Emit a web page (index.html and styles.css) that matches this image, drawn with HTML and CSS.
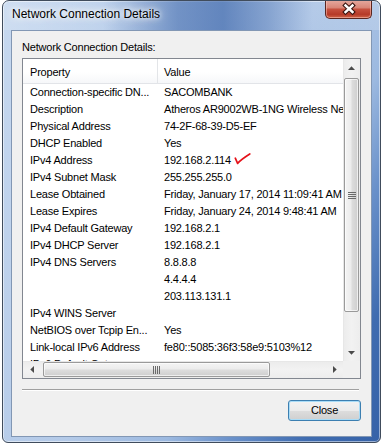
FILE: index.html
```html
<!DOCTYPE html>
<html>
<head>
<meta charset="utf-8">
<title>Network Connection Details</title>
<link rel="stylesheet" href="styles.css">
</head>
<body>
<div class="window">
  <div class="titlebar">
    <span class="title">Network Connection Details</span>
    <div class="close-x" aria-label="Close">
      <svg width="45" height="18" viewBox="0 0 45 18">
        <path d="M19.5 5.5 L26.5 12 M26.5 5.5 L19.5 12" stroke="#3b1612" stroke-width="4.6" stroke-linecap="square" fill="none"/>
        <path d="M19.5 5.5 L26.5 12 M26.5 5.5 L19.5 12" stroke="#ffffff" stroke-width="2.4" stroke-linecap="square" fill="none"/>
      </svg>
    </div>
  </div>
  <div class="client">
    <div class="label">Network Connection Details:</div>
    <div class="listbox">
      <div class="viewport">
        <div class="header"><div class="h1">Property</div><div class="h2">Value</div></div>
        <div class="row"><div class="c1">Connection-specific DN...</div><div class="c2">SACOMBANK</div></div>
        <div class="row"><div class="c1">Description</div><div class="c2">Atheros AR9002WB-1NG Wireless Network Adapter</div></div>
        <div class="row"><div class="c1">Physical Address</div><div class="c2">74-2F-68-39-D5-EF</div></div>
        <div class="row"><div class="c1">DHCP Enabled</div><div class="c2">Yes</div></div>
        <div class="row"><div class="c1">IPv4 Address</div><div class="c2">192.168.2.114<svg class="check" width="17" height="12" viewBox="0 0 17 12"><path d="M1.3 5.2 L3.6 10.4 Q7 6.5 15.8 1" stroke="#e5121a" stroke-width="1.7" stroke-linecap="round" stroke-linejoin="round" fill="none"/></svg></div></div>
        <div class="row"><div class="c1">IPv4 Subnet Mask</div><div class="c2">255.255.255.0</div></div>
        <div class="row"><div class="c1">Lease Obtained</div><div class="c2">Friday, January 17, 2014 11:09:41 AM</div></div>
        <div class="row"><div class="c1">Lease Expires</div><div class="c2">Friday, January 24, 2014 9:48:41 AM</div></div>
        <div class="row"><div class="c1">IPv4 Default Gateway</div><div class="c2">192.168.2.1</div></div>
        <div class="row"><div class="c1">IPv4 DHCP Server</div><div class="c2">192.168.2.1</div></div>
        <div class="row"><div class="c1">IPv4 DNS Servers</div><div class="c2">8.8.8.8</div></div>
        <div class="row"><div class="c1"></div><div class="c2">4.4.4.4</div></div>
        <div class="row"><div class="c1"></div><div class="c2">203.113.131.1</div></div>
        <div class="row"><div class="c1">IPv4 WINS Server</div><div class="c2"></div></div>
        <div class="row"><div class="c1">NetBIOS over Tcpip En...</div><div class="c2">Yes</div></div>
        <div class="row"><div class="c1">Link-local IPv6 Address</div><div class="c2">fe80::5085:36f3:58e9:5103%12</div></div>
        <div class="row"><div class="c1">IPv6 Default Gateway</div><div class="c2"></div></div>
      </div>
      <div class="vscroll">
        <div class="sb-btn"><svg width="7" height="4" viewBox="0 0 7 4"><polygon points="0,4 3.5,0.3 7,4" fill="#4a4a4a"/></svg></div>
        <div class="vtrack">
          <div class="vthumb"><svg width="8" height="7" viewBox="0 0 8 7"><rect x="0" y="0" width="8" height="1" fill="#6a6a6a"/><rect x="0" y="2" width="8" height="1" fill="#6a6a6a"/><rect x="0" y="4" width="8" height="1" fill="#6a6a6a"/><rect x="0" y="6" width="8" height="1" fill="#6a6a6a"/></svg></div>
        </div>
        <div class="sb-btn"><svg width="7" height="4" viewBox="0 0 7 4"><polygon points="0,0 7,0 3.5,3.7" fill="#4a4a4a"/></svg></div>
      </div>
      <div class="hscroll">
        <div class="sb-btn"><svg width="4" height="7" viewBox="0 0 4 7"><polygon points="4,0 4,7 0.3,3.5" fill="#4a4a4a"/></svg></div>
        <div class="htrack">
          <div class="hthumb"><svg width="7" height="8" viewBox="0 0 7 8"><rect x="0" y="0" width="1" height="8" fill="#6a6a6a"/><rect x="2" y="0" width="1" height="8" fill="#6a6a6a"/><rect x="4" y="0" width="1" height="8" fill="#6a6a6a"/><rect x="6" y="0" width="1" height="8" fill="#6a6a6a"/></svg></div>
        </div>
        <div class="sb-btn"><svg width="4" height="7" viewBox="0 0 4 7"><polygon points="0,0 0,7 3.7,3.5" fill="#4a4a4a"/></svg></div>
      </div>
      <div class="corner"></div>
    </div>
    <div class="sep"></div>
    <div class="actions"><button class="btn" type="button">Close</button></div>
  </div>
</div>
</body>
</html>
```

FILE: styles.css
```css
* { box-sizing: border-box; }
html, body { margin: 0; padding: 0; }
body {
  width: 384px;
  height: 445px;
  overflow: hidden;
  background: #ffffff;
  font-family: "Liberation Sans", Arial, sans-serif;
  font-size: 11px;
  letter-spacing: -0.2px;
  color: #000;
}
.window {
  margin-left: 2px;
  width: 379px;
  height: 443px;
  border: 1px solid #404c5c;
  border-radius: 7px 7px 6px 6px;
  background: linear-gradient(120deg, #c6d8ef 0%, #b4cae8 50%, #9cb9e0 66%, #6a91ca 76%, #3f6cb0 88%, #3662a8 100%);
  padding: 0 8px 5px;
  display: flex;
  flex-direction: column;
  box-shadow: inset 0 0 0 1px rgba(255, 255, 255, 0.5);
  overflow: hidden;
}
.titlebar {
  margin: 0 -8px;
  height: 29px;
  flex: none;
  padding: 0 8px 0 9px;
  display: flex;
  justify-content: space-between;
  align-items: flex-start;
  background: linear-gradient(90deg, rgba(255,255,255,0.15) 0, rgba(255,255,255,0) 100px, rgba(40,85,160,0.5) 175px, rgba(40,85,160,0.6) 220px, rgba(40,85,160,0.35) 265px, rgba(255,255,255,0) 310px, rgba(255,255,255,0.2) 379px);
}
.title {
  font-size: 12px;
  letter-spacing: 0;
  line-height: 16px;
  padding-top: 5px;
  color: #000;
  text-shadow: 0 0 8px rgba(255,255,255,0.95), 0 0 4px rgba(255,255,255,0.9), 0 0 12px rgba(255,255,255,0.8);
}
.close-x {
  width: 47px;
  height: 19px;
  margin-top: -1px;
  border: 1px solid #5a2620;
  border-top: none;
  border-radius: 0 0 5px 5px;
  background: linear-gradient(#e6aaa0 0%, #d98678 42%, #c6503e 52%, #b63a28 80%, #d06448 100%);
  box-shadow: inset 0 0 0 1px rgba(255, 205, 195, 0.5);
  display: flex;
}
.client {
  flex: 1;
  border: 1px solid #8297b4;
  background: #f0f0f0;
  padding: 9px 10px 0;
  display: flex;
  flex-direction: column;
}
.label {
  line-height: 15px;
  height: 15px;
}
.listbox {
  margin-top: 3px;
  width: 339px;
  height: 321px;
  flex: none;
  border: 1px solid #828790;
  background: #fff;
  display: grid;
  grid-template-columns: 320px 17px;
  grid-template-rows: 302px 17px;
}
.viewport {
  overflow: hidden;
}
.header {
  display: flex;
  width: 460px;
  height: 25px;
  border-bottom: 1px solid #e2e4e8;
  background: linear-gradient(#ffffff 0%, #ffffff 55%, #f6f7f9 100%);
}
.h1 {
  width: 135px;
  flex: none;
  border-right: 1px solid #e3e5e8;
  padding: 2px 0 0 7px;
  line-height: 22px;
}
.h2 {
  flex: 1;
  padding: 2px 0 0 6px;
  line-height: 22px;
}
.row {
  display: flex;
  width: 460px;
  height: 17px;
  line-height: 17px;
  white-space: nowrap;
}
.c1 {
  width: 135px;
  flex: none;
  padding-left: 7px;
  overflow: hidden;
}
.c2 {
  width: 325px;
  flex: none;
  padding-left: 6px;
  overflow: hidden;
}
.check {
  display: inline-block;
  vertical-align: top;
  margin: 1px 0 0 3px;
}
.vscroll {
  display: flex;
  flex-direction: column;
  background: linear-gradient(90deg, #e2e2e2 0, #ececec 1px, #f2f2f2 50%, #ededed 100%);
}
.hscroll {
  display: flex;
  background: linear-gradient(#e2e2e2 0, #ececec 1px, #f2f2f2 50%, #ededed 100%);
}
.sb-btn {
  flex: none;
  width: 17px;
  height: 17px;
  display: flex;
  align-items: center;
  justify-content: center;
}
.vtrack {
  flex: 1;
  padding: 2px 1px 0;
}
.vthumb {
  height: 234px;
  border: 1px solid #9a9a9a;
  border-radius: 2px;
  background: linear-gradient(90deg, #f4f4f4 0%, #ececec 45%, #dcdcdc 55%, #cecece 100%);
  box-shadow: inset 0 0 0 1px rgba(255,255,255,0.65);
  display: flex;
  align-items: center;
  justify-content: center;
}
.htrack {
  flex: 1;
  padding: 1px 0 0 3px;
}
.hthumb {
  width: 227px;
  height: 15px;
  border: 1px solid #9a9a9a;
  border-radius: 2px;
  background: linear-gradient(#f4f4f4 0%, #ececec 45%, #dcdcdc 55%, #cecece 100%);
  box-shadow: inset 0 0 0 1px rgba(255,255,255,0.65);
  display: flex;
  align-items: center;
  justify-content: center;
}
.corner {
  background: #f0f0f0;
}
.sep {
  margin-top: 10px;
  width: 337px;
  height: 2px;
  flex: none;
  border-top: 1px solid #a0a0a0;
  border-bottom: 1px solid #ffffff;
}
.actions {
  margin-top: 9px;
  display: flex;
  justify-content: flex-end;
}
.btn {
  width: 73px;
  height: 21px;
  padding: 0;
  font: inherit;
  letter-spacing: -0.2px;
  line-height: 19px;
  color: #000;
  border: 1px solid #3c7fb1;
  border-radius: 3px;
  background: linear-gradient(#f2f2f2 0%, #ebebeb 50%, #dddddd 51%, #cfcfcf 100%);
  box-shadow: inset 0 0 0 1px #a9dcf7;
}
```
